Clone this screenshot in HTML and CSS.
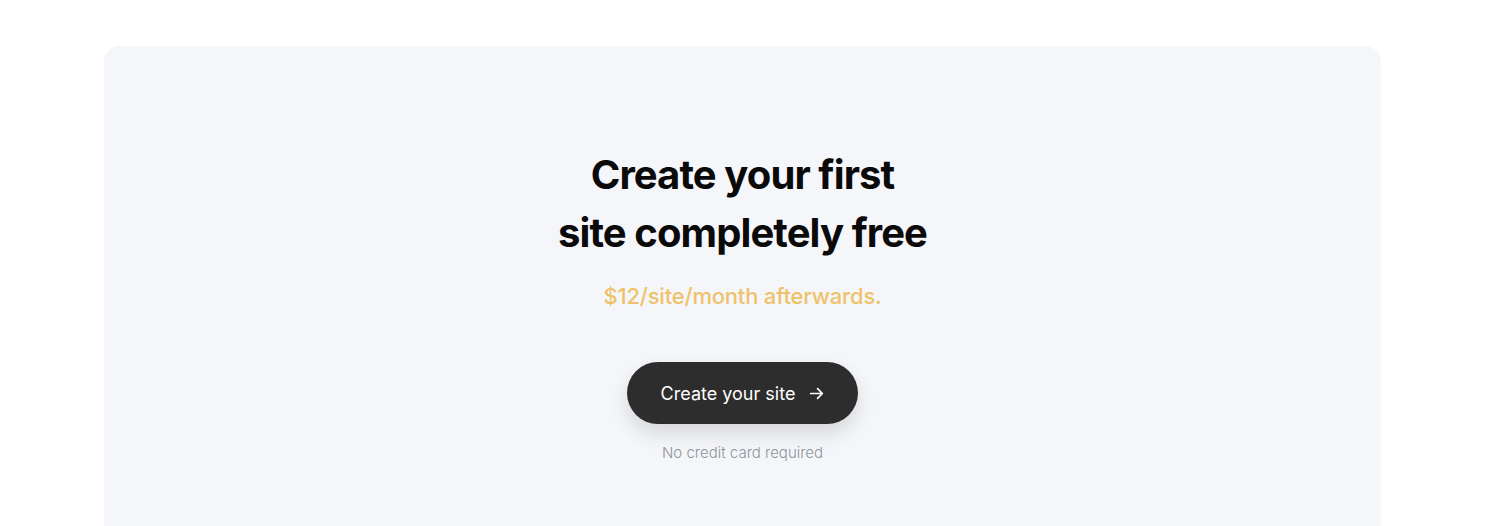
FILE: index.html
```html
<!DOCTYPE html>
<html lang="en">
<head>
<meta charset="utf-8">
<link rel="stylesheet" href="styles.css">
</head>
<body>
<section class="cta">
  <div class="card">
    <h2 class="title">Create your first<br>site completely free</h2>
    <p class="price">$12/site/month afterwards.</p>
    <a class="btn" href="#">Create your site
      <svg class="arrow" width="17" height="17" viewBox="0 0 16 16" fill="none" stroke="currentColor" stroke-width="1.6" stroke-linecap="round" stroke-linejoin="round"><path d="M2.5 8h11M9 3.5 13.5 8 9 12.5"/></svg>
    </a>
    <p class="note">No credit card required</p>
  </div>
</section>
</body>
</html>
```
FILE: styles.css
```css
* { box-sizing: border-box; }
html, body { margin: 0; padding: 0; background: #fff; }
body { font-family: Inter, "Noto Sans", sans-serif; -webkit-font-smoothing: antialiased; }
.cta { padding: 46px 104px 0; }
.card {
  background: #f5f6f9;
  border-radius: 16px 16px 0 0;
  height: 480px;
  display: flex;
  flex-direction: column;
  align-items: center;
  padding-top: 100px;
}
.title {
  margin: 0;
  font-size: 40px;
  line-height: 58px;
  font-weight: 700;
  letter-spacing: -0.9px;
  color: #0a0a0a;
  text-align: center;
}
.price {
  margin: 19px 0 0;
  font-size: 22px;
  line-height: 30px;
  font-weight: 500;
  color: #efc26a;
  letter-spacing: -0.2px;
}
.btn {
  margin-top: 51px;
  display: flex;
  align-items: center;
  gap: 13px;
  height: 62px;
  padding: 0 33px 0 34px;
  border-radius: 31px;
  background: #2d2d2d;
  color: #fff;
  text-decoration: none;
  font-size: 18px;
  font-weight: 400;
  box-shadow: 0 10px 20px rgba(0,0,0,0.12);
}
.arrow { display: block; }
.note {
  margin: 19px 0 0;
  font-size: 15px;
  line-height: 20px;
  font-weight: 300;
  color: #8e939b;
}
```
